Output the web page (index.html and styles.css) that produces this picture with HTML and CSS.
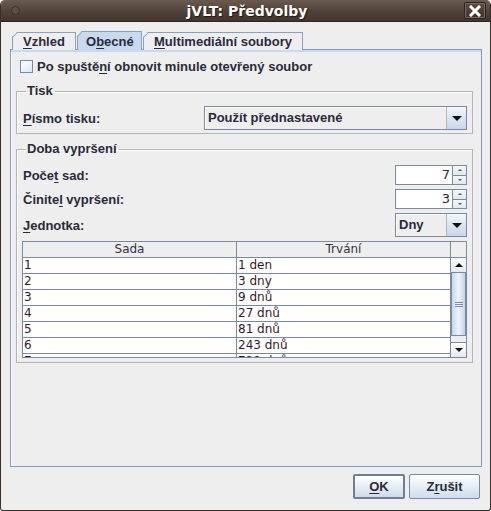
FILE: index.html
```html
<!DOCTYPE html>
<html>
<head>
<meta charset="utf-8">
<link rel="stylesheet" href="styles.css">
</head>
<body>
<div class="window">
  <div class="titlebar">
    <span class="title-dot"></span>
    <span class="title">jVLT: Předvolby</span>
    <span class="close-btn">
      <svg width="12" height="12" viewBox="0 0 12 12"><path d="M2 2 L10 10 M10 2 L2 10" stroke="#fff" stroke-width="3" stroke-linecap="square"/></svg>
    </span>
  </div>
  <div class="content">
    <div class="tabs">
      <div class="tab"><u>V</u>zhled</div>
      <div class="tab selected">O<u>b</u>ecné</div>
      <div class="tab"><u>M</u>ultimediální soubory</div>
    </div>
    <div class="panel">
      <label class="check-row"><span class="checkbox"></span>Po spuště<u>n</u>í obnovit minule otevřený soubor</label>

      <fieldset class="group group-tisk">
        <legend>Tisk</legend>
        <div class="row">
          <span class="label"><u>P</u>ísmo tisku:</span>
          <div class="combo combo-wide">
            <span class="combo-text">Použít přednastavené</span>
            <span class="combo-arrow"><span class="tri"></span></span>
          </div>
        </div>
      </fieldset>

      <fieldset class="group group-doba">
        <legend>Doba vypršení</legend>
        <div class="row row-spin">
          <span class="label">Poče<u>t</u> sad:</span>
          <div class="spinner">
            <span class="spin-field">7</span>
            <span class="spin-btns"><span class="spin-btn"><span class="tri-up"></span></span><span class="spin-btn"><span class="tri-dn"></span></span></span>
          </div>
        </div>
        <div class="row row-spin">
          <span class="label">Činite<u>l</u> vypršení:</span>
          <div class="spinner">
            <span class="spin-field">3</span>
            <span class="spin-btns"><span class="spin-btn"><span class="tri-up"></span></span><span class="spin-btn"><span class="tri-dn"></span></span></span>
          </div>
        </div>
        <div class="row row-combo">
          <span class="label"><u>J</u>ednotka:</span>
          <div class="combo combo-small">
            <span class="combo-text">Dny</span>
            <span class="combo-arrow"><span class="tri"></span></span>
          </div>
        </div>
        <div class="table">
          <div class="table-main">
            <div class="thead">
              <div class="th th1">Sada</div>
              <div class="th th2">Trvání</div>
            </div>
            <div class="tbody">
              <div class="tr"><div class="td td1">1</div><div class="td td2">1 den</div></div>
              <div class="tr"><div class="td td1">2</div><div class="td td2">3 dny</div></div>
              <div class="tr"><div class="td td1">3</div><div class="td td2">9 dnů</div></div>
              <div class="tr"><div class="td td1">4</div><div class="td td2">27 dnů</div></div>
              <div class="tr"><div class="td td1">5</div><div class="td td2">81 dnů</div></div>
              <div class="tr"><div class="td td1">6</div><div class="td td2">243 dnů</div></div>
              <div class="tr"><div class="td td1">7</div><div class="td td2">729 dnů</div></div>
            </div>
          </div>
          <div class="scroll-col">
            <div class="scroll-corner"></div>
            <div class="scrollbar">
              <div class="sb-btn"><span class="tri-up-b"></span></div>
              <div class="sb-track">
                <div class="sb-thumb"><span class="grip"></span><span class="grip"></span><span class="grip"></span></div>
              </div>
              <div class="sb-btn"><span class="tri-dn-b"></span></div>
            </div>
          </div>
        </div>
      </fieldset>
    </div>
    <div class="buttons">
      <div class="btn btn-default"><u>O</u>K</div>
      <div class="btn">Z<u>r</u>ušit</div>
    </div>
  </div>
</div>
</body>
</html>
```
FILE: styles.css
```css
* { box-sizing: border-box; }
html, body { margin: 0; padding: 0; }
body {
  width: 491px;
  height: 511px;
  background: #ffffff;
  font-family: "Liberation Sans", Arial, sans-serif;
  font-size: 13px;
  color: #2a2a3a;
  overflow: hidden;
}
u { text-decoration: underline; text-underline-offset: 2px; }

.window {
  width: 491px;
  height: 511px;
  background: #eeeeee;
  border: 1px solid #3a2f28;
  border-top: none;
  border-radius: 5px 5px 3px 3px;
  display: flex;
  flex-direction: column;
  overflow: hidden;
}

.titlebar {
  height: 22px;
  flex: none;
  background: linear-gradient(#6b5a4f, #4f4038 60%, #43362f);
  display: flex;
  align-items: center;
  position: relative;
  border-bottom: 1px solid #2e2520;
}
.title-dot {
  width: 9px; height: 9px;
  border-radius: 50%;
  border: 1px solid #3b302a;
  background: #5e4e45;
  margin-left: 10px;
}
.title {
  flex: 1;
  text-align: center;
  color: #ffffff;
  font-family: "DejaVu Sans", sans-serif;
  font-weight: bold;
  font-size: 14px;
  text-shadow: 1px 1px 1px #1c1511;
  margin-left: 10px;
}
.close-btn {
  width: 22px; height: 17px;
  border: 1px solid #2c231e;
  border-radius: 2px;
  background: linear-gradient(#5c4c43, #3f332c);
  box-shadow: inset 0 0 0 1px #7b6a60;
  display: flex; align-items: center; justify-content: center;
  margin-right: 4px;
}

.content {
  flex: 1;
  display: flex;
  flex-direction: column;
  padding: 10px 8px 0 9px;
}

.tabs {
  display: flex;
  padding-left: 2px;
  height: 18px;
  align-items: flex-end;
  font-weight: bold;
  position: relative;
  z-index: 1;
}
.tab {
  height: 18px;
  border: 1px solid #8a9fc4;
  border-bottom: none;
  padding: 1px 6px 0 10px;
  background: #eeeeee;
  clip-path: polygon(0 5px, 5px 0, 100% 0, 100% 100%, 0 100%);
  margin-right: 1px;
  position: relative;
  line-height: 15px;
  white-space: nowrap;
}
.tab::before {
  content: "";
  position: absolute;
  left: -1px; top: -1px;
  width: 8px; height: 1px;
  background: #8a9fc4;
  transform-origin: 0 0;
  transform: translate(0, 5px) rotate(-45deg);
}
.tab:first-child { width: 64px; }
.tab.selected {
  background: #c8daf0;
  height: 19px;
  width: 65px;
  padding-left: 8px;
  padding-top: 2px;
}
.tab:last-child { width: 160px; }

.panel {
  height: 418px;
  border: 1px solid #7e9bca;
  box-shadow: inset 0 2px 0 #c8daf0, inset 1px 0 0 #ffffff;
  background: #eeeeee;
  display: flex;
  flex-direction: column;
  padding: 10px 8px 0 5px;
  margin-top: -1px;
}

.check-row {
  display: flex;
  align-items: center;
  font-weight: bold;
  margin-left: 4px;
  height: 13px;
}
.checkbox {
  width: 13px; height: 13px;
  border: 1px solid #7a8aa0;
  background: linear-gradient(135deg, #ffffff, #dde6f1);
  margin-right: 4px;
}

.group {
  margin: 0;
  border: 1px solid #b4b4b4;
  padding: 0 5px 0 5px;
  min-width: 0;
  box-shadow: inset 1px 1px 0 #ffffff;
}
.group legend {
  padding: 0 2px 0 1px;
  margin-left: 4px;
  font-weight: bold;
  line-height: 14px;
}
.group-tisk {
  margin-top: 11px;
  height: 50px;
  padding-top: 8px;
}
.group-doba {
  margin-top: 8px;
  height: 221px;
  padding-top: 9px;
}

.row {
  display: flex;
  justify-content: space-between;
  align-items: center;
  font-weight: bold;
}
.label { padding-left: 1px; }

.combo {
  display: flex;
  height: 24px;
  border: 1px solid #7a8aa0;
  background: #eeeeee;
  box-shadow: inset 1px 1px 0 #ffffff;
}
.combo-wide { width: 263px; }
.combo-small { width: 72px; }
.combo-text {
  flex: 1;
  padding-left: 3px;
  line-height: 21px;
  font-weight: bold;
}
.combo-arrow {
  width: 20px;
  border-left: 1px solid #a8b8cc;
  background: linear-gradient(#f4f8fc, #dbe5f1 50%, #c9d8ea);
  display: flex; align-items: center; justify-content: center;
}
.tri {
  width: 0; height: 0;
  border-left: 5px solid transparent;
  border-right: 5px solid transparent;
  border-top: 5px solid #111111;
}

.row-spin { height: 20px; margin-bottom: 4px; }
.row-combo { height: 24px; margin-bottom: 4px; }
.spinner {
  width: 72px; height: 20px;
  display: flex;
}
.spin-field {
  flex: 1;
  background: #ffffff;
  border: 1px solid #7a8aa0;
  border-right: none;
  text-align: right;
  padding-right: 2px;
  font-weight: normal;
  font-family: "DejaVu Sans", sans-serif;
  font-size: 13px;
  line-height: 18px;
}
.spin-btns {
  width: 15px;
  display: flex;
  flex-direction: column;
  border: 1px solid #7a8aa0;
}
.spin-btn {
  flex: 1;
  background: linear-gradient(#f6f8fb, #dfe7f0);
  display: flex; align-items: center; justify-content: center;
}
.spin-btn + .spin-btn { border-top: 1px solid #7a8aa0; }
.tri-up, .tri-dn {
  width: 0; height: 0;
  border-left: 2px solid transparent;
  border-right: 2px solid transparent;
}
.tri-up { border-bottom: 2px solid #555; }
.tri-dn { border-top: 2px solid #555; }

.table {
  display: flex;
  height: 117px;
  border: 1px solid #7a8aa0;
  background: #ffffff;
  overflow: hidden;
  font-family: "DejaVu Sans", sans-serif;
  font-size: 12px;
  margin-top: 1px;
}
.table-main { flex: 1; overflow: hidden; }
.thead {
  display: flex;
  height: 16px;
  background: #eeeeee;
  border-bottom: 1px solid #7a8aa0;
}
.th {
  text-align: center;
  line-height: 15px;
  color: #333344;
}
.th1 { width: 214px; border-right: 1px solid #7a8aa0; }
.th2 { flex: 1; }
.tr {
  display: flex;
  height: 16px;
  border-bottom: 1px solid #7a8aa0;
  color: #331a2a;
}
.td { line-height: 15px; padding-left: 1px; }
.td1 { width: 214px; border-right: 1px solid #7a8aa0; }
.td2 { flex: 1; }

.scroll-col {
  width: 16px;
  display: flex;
  flex-direction: column;
  border-left: 1px solid #7a8aa0;
}
.scroll-corner {
  height: 16px;
  background: #eeeeee;
  border-bottom: 1px solid #7a8aa0;
  flex: none;
}
.scrollbar {
  flex: 1;
  display: flex;
  flex-direction: column;
  background: #eeeeee;
}
.sb-btn {
  height: 15px;
  flex: none;
  background: linear-gradient(#ffffff, #e4eaf2);
  display: flex; align-items: center; justify-content: center;
  border-bottom: 1px solid #7a8aa0;
}
.sb-btn:last-child { border-bottom: none; border-top: 1px solid #7a8aa0; }
.tri-up-b, .tri-dn-b {
  width: 0; height: 0;
  border-left: 4px solid transparent;
  border-right: 4px solid transparent;
}
.tri-up-b { border-bottom: 4px solid #111; }
.tri-dn-b { border-top: 4px solid #111; }
.sb-track { flex: 1; padding-bottom: 6px; }
.sb-thumb {
  height: 100%;
  border: 1px solid #7a8aa0;
  border-top: none;
  background: linear-gradient(90deg, #c9d8ec, #eef3fa 50%, #c3d4ea);
  display: flex; flex-direction: column; align-items: center; justify-content: center;
  gap: 1px;
}
.grip { width: 8px; height: 1px; background: #7a8fb0; }

.buttons {
  display: flex;
  justify-content: flex-end;
  padding: 7px 2px 0 0;
  gap: 4px;
  font-weight: bold;
}
.btn {
  height: 25px;
  width: 71px;
  border: 1px solid #7a8aa0;
  border-radius: 2px;
  background: linear-gradient(#ffffff, #e6edf5 50%, #cfdcec);
  display: flex; align-items: center; justify-content: center;
}
.btn-default {
  width: 52px;
  border: 2px solid #6f7f92;
}
```
